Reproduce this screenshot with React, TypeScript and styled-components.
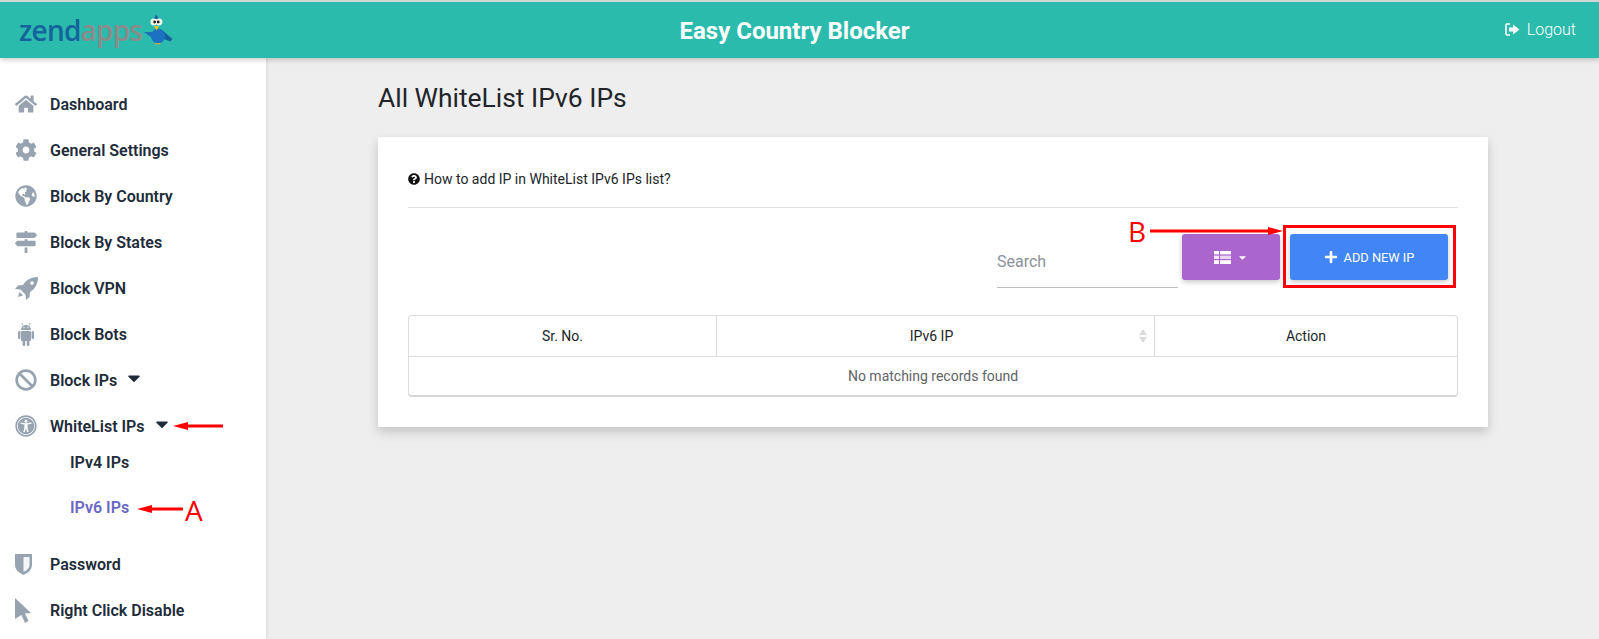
import styled, { createGlobalStyle } from "styled-components";
import { ReactNode } from "react";
import {
  FaHome,
  FaCog,
  FaGlobeAmericas,
  FaMapSigns,
  FaBan,
  FaUniversalAccess,
  FaQuestionCircle,
  FaPlus,
  FaCaretDown,
} from "react-icons/fa";

const GlobalStyle = createGlobalStyle`
  html, body {
    margin: 0;
    padding: 0;
    height: 639px;
    overflow: hidden;
    background: #eeeeee;
    font-family: Roboto, "Liberation Sans", sans-serif;
    color: #212529;
  }
  * { box-sizing: border-box; }
`;

const Bird = () => (
  <svg width="31" height="31" viewBox="0 0 31 31">
    <path d="M2 18 L12 18 L13 26 Z" fill="#1a6fb5" />
    <path d="M20 16 L30.5 25 L28.5 27.5 L19 24 Z" fill="#14609f" />
    <ellipse cx="16" cy="22" rx="7" ry="7.5" fill="#1b72c2" />
    <path d="M12 29 h7 l-1 1.5 h-5 Z" fill="#b7b04a" />
    <path d="M12 5 L14 0.5 L17 5 Z" fill="#14609f" />
    <circle cx="11.8" cy="8" r="3.4" fill="#f2f4ea" />
    <circle cx="17" cy="8" r="3.4" fill="#f2f4ea" />
    <circle cx="12.6" cy="8" r="1.4" fill="#222" />
    <circle cx="16.2" cy="8" r="1.4" fill="#222" />
    <path d="M12 12 h5 l-2.5 4.5 Z" fill="#f2c21a" />
  </svg>
);

const LogoutIcon = () => (
  <svg width="15" height="13" viewBox="0 0 15 13" fill="#fff">
    <path d="M5 1 H2 Q1 1 1 2 V11 Q1 12 2 12 H5" fill="none" stroke="#fff" strokeWidth="1.6" />
    <path d="M8 1.5 L14.5 6.5 L8 11.5 V8.5 H4 V4.5 H8 Z" />
  </svg>
);

const TableIcon = () => (
  <svg width="17" height="13" viewBox="0 0 17 13" fill="#fff">
    <rect x="0" y="0" width="5" height="3.4" />
    <rect x="6" y="0" width="11" height="3.4" />
    <rect x="0" y="4.6" width="5" height="3.4" opacity="0.85" />
    <rect x="6" y="4.6" width="11" height="3.4" opacity="0.75" />
    <rect x="0" y="9.2" width="5" height="3.8" />
    <rect x="6" y="9.2" width="11" height="3.8" />
  </svg>
);

const RocketIcon = () => (
  <svg width="23" height="23" viewBox="0 0 23 23" fill="currentColor">
    <path
      fillRule="evenodd"
      d="M23 0 C16 0 11 3 8 8 L3 8.5 L0 12 L5.5 12.5 L10.5 17.5 L11 23 L14.5 20 L15 15 C20 12 23 7 23 0 Z M17 4.2 a1.8 1.8 0 1 0 0.01 0 Z"
    />
    <path d="M4.5 15 L8 18.5 L3 20 Z" />
  </svg>
);

const AndroidIcon = () => (
  <svg width="22" height="24" viewBox="-3 0 22 24" fill="currentColor">
    <path d="M3 8 a5 5 0 0 1 10 0 Z" />
    <path d="M5 3.5 L3.8 1 M11 3.5 L12.2 1" stroke="currentColor" strokeWidth="0.8" />
    <rect x="3" y="9" width="10" height="10" rx="1" />
    <rect x="0" y="9" width="2.4" height="8" rx="1.2" />
    <rect x="13.6" y="9" width="2.4" height="8" rx="1.2" />
    <rect x="4.6" y="17" width="2.6" height="7" rx="1.3" />
    <rect x="8.8" y="17" width="2.6" height="7" rx="1.3" />
    <circle cx="6" cy="5.6" r="0.7" fill="#fff" />
    <circle cx="10" cy="5.6" r="0.7" fill="#fff" />
  </svg>
);

const ShieldIcon = () => (
  <svg width="17" height="21" viewBox="0 0 17 21" fill="currentColor">
    <path d="M0 0 H17 V11 Q17 17 8.5 21 Q0 17 0 11 Z" />
    <path d="M8.5 3 H14.5 V11 Q14.5 15 8.5 18 Z" fill="#f4f6f8" />
  </svg>
);

const PointerIcon = () => (
  <svg width="17" height="25" viewBox="0 0 17 25" fill="currentColor">
    <path d="M0 0 L16 15 L10 15.5 L13.5 23 L10 25 L6.5 17 L0 21 Z" />
  </svg>
);

const Header = styled.header`
  height: 58px;
  background: #2bbbad;
  border-top: 2px solid #cfd8d6;
  display: grid;
  grid-template-columns: 1fr auto 1fr;
  align-items: center;
  padding: 0 23px 0 19px;
  box-shadow: 0 2px 5px rgba(0, 0, 0, 0.2);
  position: relative;
  z-index: 2;
`;

const Logo = styled.div`
  display: flex;
  align-items: center;
  font-family: "Open Sans", sans-serif;
  font-size: 28px;
  font-weight: 600;
  letter-spacing: -0.8px;
  line-height: 1;
  color: #14639b;
  & span { color: #8b8b8b; }
  & svg { margin-top: -1px; }
`;

const Brand = styled.div`
  color: #fff;
  font-size: 24px;
  font-weight: 700;
  margin: 1px 6px 0 0;
`;

const Logout = styled.a`
  justify-self: end;
  display: flex;
  align-items: center;
  gap: 7px;
  color: #fff;
  font-size: 16px;
  font-weight: 300;
  margin-top: -1px;
`;

const Body = styled.div`
  display: flex;
  height: 581px;
`;

const Sidebar = styled.nav`
  width: 267px;
  flex: none;
  background: #fff;
  border-right: 1px solid #e2e2e2;
  padding-top: 23px;
  box-shadow: 0 0 4px rgba(0, 0, 0, 0.08);
`;

const NavRow = styled.div<{ $offset?: number }>`
  height: 46px;
  display: flex;
  align-items: center;
  padding-left: 15px;
  margin-top: ${(p) => p.$offset ?? 0}px;
  font-size: 16px;
  font-weight: 600;
  color: #212b3a;
`;

const IconBox = styled.span`
  width: 35px;
  flex: none;
  display: flex;
  align-items: center;
  color: #97a3b1;
  font-size: 22px;
`;

const Caret = styled(FaCaretDown)`
  margin-left: 7px;
  margin-top: -4px;
  font-size: 20px;
  color: #212b3a;
`;

const SubList = styled.div`
  margin-top: -9px;
`;

const SubRow = styled.div<{ $active?: boolean }>`
  height: 45px;
  display: flex;
  align-items: center;
  padding-left: 70px;
  font-size: 16px;
  font-weight: 600;
  color: ${(p) => (p.$active ? "#6a68c4" : "#212b3a")};
`;

const Main = styled.main`
  flex: 1;
  padding: 0 111px;
`;

const Title = styled.h1`
  margin: 25px 0 23px;
  height: 31px;
  font-size: 26.4px;
  line-height: 31px;
  font-weight: 400;
  color: #212529;
`;

const Card = styled.section`
  width: 1110px;
  height: 290px;
  background: #fff;
  padding: 30px;
  box-shadow: 0 5px 10px rgba(0, 0, 0, 0.18);
`;

const HelpLine = styled.div`
  display: flex;
  align-items: center;
  gap: 4px;
  height: 23px;
  font-size: 14px;
  color: #212529;
  & svg { font-size: 12px; color: #111; }
`;

const Rule = styled.hr`
  margin: 17px 0 0;
  border: none;
  border-top: 1px solid #e0e0e0;
`;

const Toolbar = styled.div`
  display: flex;
  justify-content: flex-end;
  align-items: flex-start;
  margin-top: 26px;
  padding-right: 10px;
  height: 81px;
`;

const Search = styled.div`
  width: 181px;
  height: 54px;
  padding-top: 18px;
  margin-right: 4px;
  border-bottom: 1px solid #bdbdbd;
  font-size: 16px;
  color: #8a929a;
  line-height: 20px;
`;

const ActionButton = styled.button<{ $color: string; $width: number; $gap?: number }>`
  width: ${(p) => p.$width}px;
  height: 46px;
  margin-left: ${(p) => p.$gap ?? 0}px;
  border: none;
  border-radius: 3px;
  background: ${(p) => p.$color};
  color: #fff;
  display: flex;
  align-items: center;
  justify-content: center;
  font-family: Roboto, sans-serif;
  font-size: 12.8px;
  font-weight: 400;
  box-shadow: 0 2px 5px rgba(0, 0, 0, 0.22);
`;

const SmallCaret = styled(FaCaretDown)`
  margin-left: 6px;
  font-size: 11px;
`;

const PlusIcon = styled(FaPlus)`
  margin-right: 6px;
  font-size: 14px;
`;

const TableBox = styled.div`
  border: 1px solid #dcdcdc;
  border-bottom: 2px solid #d6d6d6;
  border-radius: 4px;
  height: 82px;
  font-size: 14px;
`;

const HeadRow = styled.div`
  display: grid;
  grid-template-columns: 307px 438px 1fr;
  height: 41px;
  border-bottom: 1px solid #dcdcdc;
`;

const HeadCell = styled.div<{ $sortable?: boolean }>`
  display: flex;
  align-items: center;
  justify-content: center;
  padding-right: ${(p) => (p.$sortable ? 8 : 0)}px;
  color: #212529;
  position: relative;
  & + & { border-left: 1px solid #dcdcdc; }
`;

const SortMark = styled.span`
  position: absolute;
  right: 7px;
  top: 13px;
  display: flex;
  flex-direction: column;
  gap: 2px;
  &::before, &::after {
    content: "";
    width: 0;
    height: 0;
    border-left: 4px solid transparent;
    border-right: 4px solid transparent;
  }
  &::before { border-bottom: 6px solid #dcdcdc; }
  &::after { border-top: 6px solid #dcdcdc; }
`;

const EmptyRow = styled.div`
  height: 38px;
  display: flex;
  align-items: center;
  justify-content: center;
  color: #5f6368;
`;

const RedBox = styled.div`
  position: absolute;
  left: 1283px;
  top: 225px;
  width: 173px;
  height: 63px;
  border: 3px solid #ff0000;
  z-index: 5;
`;

const Letter = styled.div<{ $x: number; $y: number }>`
  position: absolute;
  left: ${(p) => p.$x}px;
  top: ${(p) => p.$y}px;
  z-index: 5;
  font-family: "Open Sans", sans-serif;
  font-size: 28px;
  font-weight: 400;
  line-height: 30px;
  color: #ff0000;
`;

const ArrowSvg = styled.svg<{ $x: number; $y: number }>`
  position: absolute;
  left: ${(p) => p.$x}px;
  top: ${(p) => p.$y}px;
  z-index: 5;
`;

const Arrow = ({ x, y, length, right }: { x: number; y: number; length: number; right?: boolean }) => (
  <ArrowSvg $x={x} $y={y} width={length} height="10" viewBox={`0 0 ${length} 10`}>
    {right ? (
      <>
        <rect x="0" y="3.5" width={length - 12} height="3" fill="#f00" />
        <path d={`M${length - 15} 1 L${length} 5 L${length - 15} 9 Z`} fill="#f00" />
      </>
    ) : (
      <>
        <rect x="12" y="3.5" width={length - 12} height="3" fill="#f00" />
        <path d="M15 1 L0 5 L15 9 Z" fill="#f00" />
      </>
    )}
  </ArrowSvg>
);

const NavItem = ({ icon, children, offset }: { icon: ReactNode; children: ReactNode; offset?: number }) => (
  <NavRow $offset={offset}>
    <IconBox>{icon}</IconBox>
    {children}
  </NavRow>
);

const App = () => {
  return (
    <>
      <GlobalStyle />
      <Header>
        <Logo>
          zend<span>apps</span>
          <Bird />
        </Logo>
        <Brand>Easy Country Blocker</Brand>
        <Logout>
          <LogoutIcon />
          Logout
        </Logout>
      </Header>
      <Body>
        <Sidebar>
          <NavItem icon={<FaHome />}>Dashboard</NavItem>
          <NavItem icon={<FaCog />}>General Settings</NavItem>
          <NavItem icon={<FaGlobeAmericas />}>Block By Country</NavItem>
          <NavItem icon={<FaMapSigns />}>Block By States</NavItem>
          <NavItem icon={<RocketIcon />}>Block VPN</NavItem>
          <NavItem icon={<AndroidIcon />}>Block Bots</NavItem>
          <NavItem icon={<FaBan />}>
            Block IPs
            <Caret />
          </NavItem>
          <NavItem icon={<FaUniversalAccess />}>
            WhiteList IPs
            <Caret />
          </NavItem>
          <SubList>
            <SubRow>IPv4 IPs</SubRow>
            <SubRow $active>IPv6 IPs</SubRow>
          </SubList>
          <NavItem icon={<ShieldIcon />} offset={11}>Password</NavItem>
          <NavItem icon={<PointerIcon />}>Right Click Disable</NavItem>
        </Sidebar>
        <Main>
          <Title>All WhiteList IPv6 IPs</Title>
          <Card>
            <HelpLine>
              <FaQuestionCircle />
              How to add IP in WhiteList IPv6 IPs list?
            </HelpLine>
            <Rule />
            <Toolbar>
              <Search>Search</Search>
              <ActionButton $color="#aa66cc" $width={98}>
                <TableIcon />
                <SmallCaret />
              </ActionButton>
              <ActionButton $color="#4285f4" $width={158} $gap={10}>
                <PlusIcon />
                ADD NEW IP
              </ActionButton>
            </Toolbar>
            <TableBox>
              <HeadRow>
                <HeadCell>Sr. No.</HeadCell>
                <HeadCell $sortable>
                  IPv6 IP
                  <SortMark />
                </HeadCell>
                <HeadCell>Action</HeadCell>
              </HeadRow>
              <EmptyRow>No matching records found</EmptyRow>
            </TableBox>
          </Card>
        </Main>
      </Body>
      <RedBox />
      <Arrow x={173} y={421} length={50} />
      <Arrow x={137} y={504} length={46} />
      <Arrow x={1150} y={226} length={133} right />
      <Letter $x={185} $y={495}>A</Letter>
      <Letter $x={1128} $y={216}>B</Letter>
    </>
  );
};

export default App;
